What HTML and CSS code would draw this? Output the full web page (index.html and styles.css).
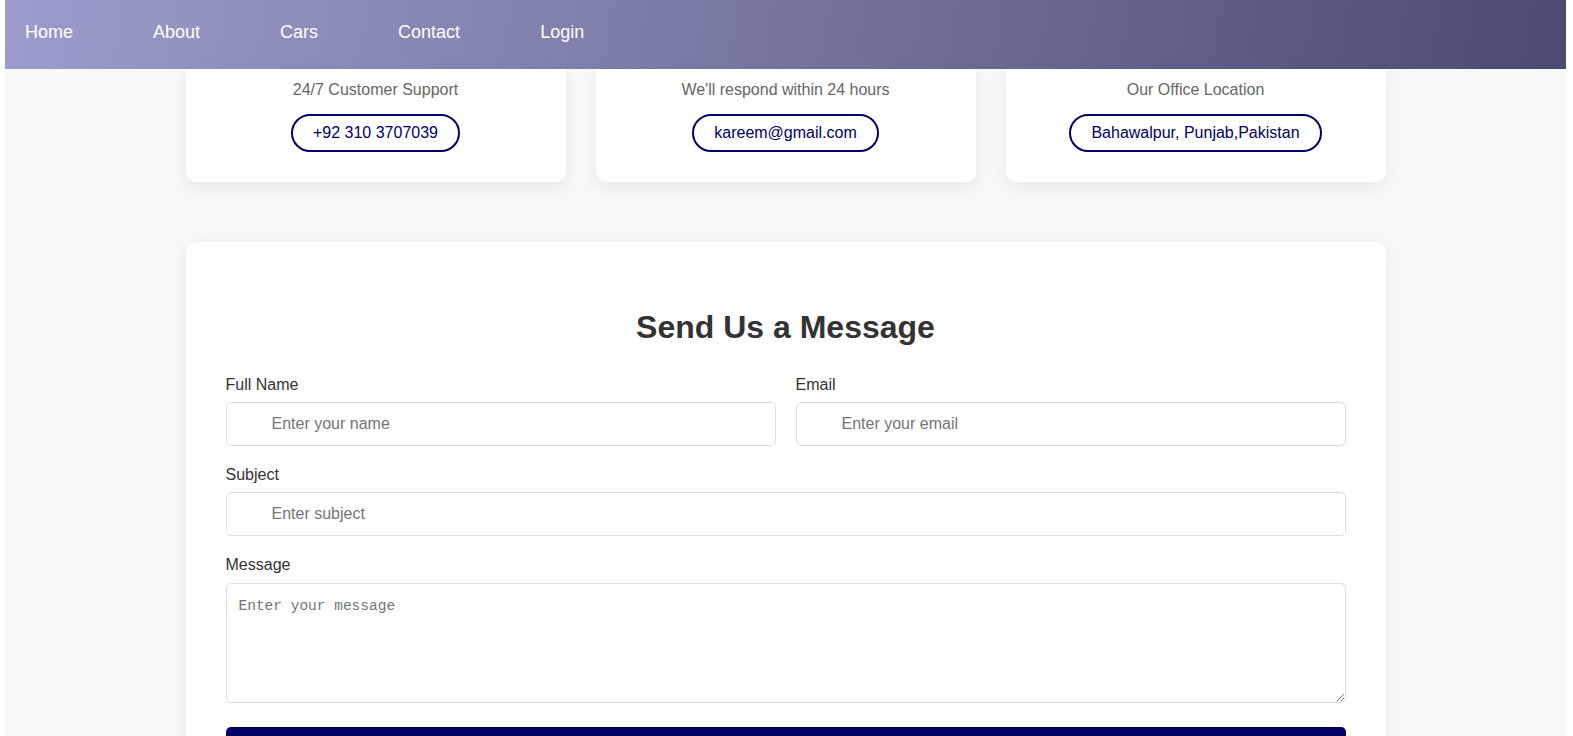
FILE: index.html
```html
<!DOCTYPE html>
<html lang="en">
<head>
<meta charset="utf-8">
<title>Contact</title>
<link rel="stylesheet" href="styles.css">
</head>
<body>
<div class="page">
  <nav class="navbar">
    <ul class="nav-links">
      <li><a href="#">Home</a></li>
      <li><a href="#">About</a></li>
      <li><a href="#">Cars</a></li>
      <li><a href="#">Contact</a></li>
      <li><a href="#">Login</a></li>
    </ul>
  </nav>

  <main class="container">
    <section class="info-cards">
      <div class="info-card">
        <p class="info-text">24/7 Customer Support</p>
        <a class="pill" href="#">+92 310 3707039</a>
      </div>
      <div class="info-card">
        <p class="info-text">We'll respond within 24 hours</p>
        <a class="pill" href="#">kareem@gmail.com</a>
      </div>
      <div class="info-card">
        <p class="info-text">Our Office Location</p>
        <a class="pill" href="#">Bahawalpur, Punjab,Pakistan</a>
      </div>
    </section>

    <section class="form-card">
      <h2 class="form-title">Send Us a Message</h2>
      <form class="contact-form">
        <div class="form-row">
          <div class="form-group">
            <label for="name">Full Name</label>
            <input id="name" type="text" placeholder="Enter your name">
          </div>
          <div class="form-group">
            <label for="email">Email</label>
            <input id="email" type="email" placeholder="Enter your email">
          </div>
        </div>
        <div class="form-group">
          <label for="subject">Subject</label>
          <input id="subject" type="text" placeholder="Enter subject">
        </div>
        <div class="form-group message-group">
          <label for="message" class="message-label">Message</label>
          <textarea id="message" placeholder="Enter your message"></textarea>
        </div>
        <button type="button" class="submit-btn">Send Message</button>
      </form>
    </section>
  </main>
</div>
</body>
</html>
```

FILE: styles.css
```css
html {
  background: #ffffff;
}

body {
  margin: 0;
  font-family: "Liberation Sans", Arial, sans-serif;
  overflow: hidden;
}

.page {
  margin: 0 7px 0 5px;
  background: #f8f8f8;
  min-height: 100vh;
}

.navbar {
  height: 69px;
  background: linear-gradient(100deg, #9c9ccc 0%, #7f7fab 38%, #4a4a72 100%);
  display: flex;
  align-items: center;
  padding: 0 0 5px 20px;
  box-sizing: border-box;
}

.nav-links {
  list-style: none;
  margin: 0;
  padding: 0;
  display: flex;
  gap: 80px;
}

.nav-links a {
  color: #ffffff;
  text-decoration: none;
  font-size: 18px;
}

.container {
  max-width: 1200px;
  margin: 0 auto;
}

.info-cards {
  display: grid;
  grid-template-columns: repeat(3, 1fr);
  gap: 30px;
}

.info-card {
  background: #ffffff;
  border-radius: 0 0 10px 10px;
  box-shadow: 0 5px 15px rgba(0, 0, 0, 0.07);
  padding: 12px 30px 30px;
  text-align: center;
}

.info-text {
  margin: 0 0 15px;
  color: #666666;
  font-size: 16px;
}

.pill {
  display: inline-block;
  border: 2px solid #000066;
  border-radius: 20px;
  padding: 8px 20px;
  color: #000066;
  text-decoration: none;
  font-size: 16px;
}

.form-card {
  margin-top: 60px;
  background: #ffffff;
  border-radius: 10px;
  box-shadow: 0 5px 15px rgba(0, 0, 0, 0.07);
  padding: 40px 40px 40px;
}

.form-title {
  margin: 27px 0 30px;
  text-align: center;
  font-size: 32px;
  font-weight: bold;
  color: #333333;
}

.form-row {
  display: grid;
  grid-template-columns: 1fr 1fr;
  gap: 20px;
}

.form-group {
  margin-bottom: 20px;
}

.form-group label {
  display: block;
  margin-bottom: 8px;
  color: #333333;
  font-size: 16px;
}

.form-group .message-label {
  margin-bottom: 9px;
}

.form-group input {
  display: block;
  width: 100%;
  box-sizing: border-box;
  height: 44px;
  padding: 12px 12px 12px 45px;
  border: 1px solid #dddddd;
  border-radius: 5px;
  font-family: "Liberation Sans", Arial, sans-serif;
  font-size: 16px;
  color: #333333;
  background: #ffffff;
}

.form-group input::placeholder {
  color: #757575;
}

.form-group textarea {
  display: block;
  width: 100%;
  box-sizing: border-box;
  height: 120px;
  padding: 14px 12px 12px;
  border: 1px solid #dddddd;
  border-radius: 5px;
  font-family: "Liberation Mono", monospace;
  font-size: 14.5px;
  color: #333333;
  background: #ffffff;
}

.form-group textarea::placeholder {
  color: #757575;
}

.message-group {
  margin-bottom: 24px;
}

.submit-btn {
  display: block;
  width: 100%;
  height: 50px;
  border: none;
  border-radius: 5px;
  background: #000066;
  color: #ffffff;
  font-family: "Liberation Sans", Arial, sans-serif;
  font-size: 18px;
}
```
